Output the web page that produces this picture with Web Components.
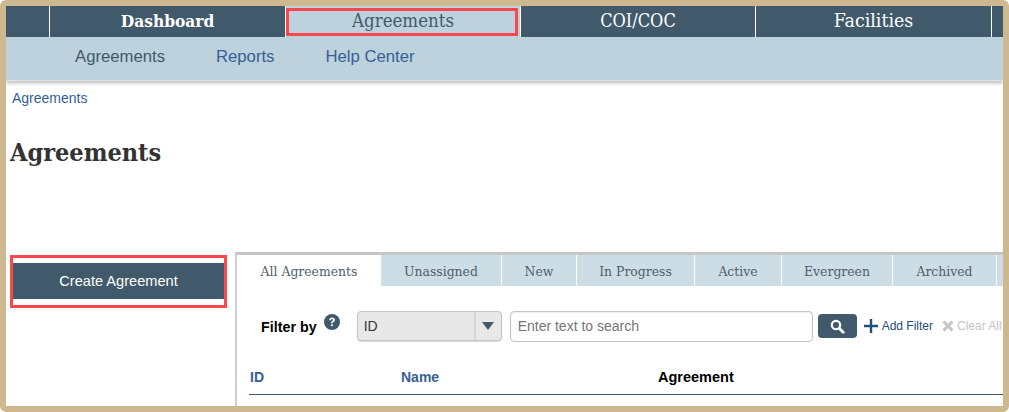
<!DOCTYPE html>
<html lang="en">
<head>
<meta charset="utf-8">
<title>Agreements</title>
<style>
  html, body { margin: 0; padding: 0; background: #fff; }
  body { font-family: "Liberation Sans", Arial, sans-serif; }
</style>
</head>
<body>
<app-frame>
  <top-nav>
    <nav-item style="width:236px" strong>Dashboard</nav-item>
    <nav-item style="width:235px" active>Agreements</nav-item>
    <nav-item style="width:235px;font-size:18px">COI/COC</nav-item>
    <nav-item style="width:236px;font-size:19.4px">Facilities</nav-item>
    <nav-item style="width:12px"></nav-item>
  </top-nav>
  <sub-nav>
    <a-link first>Agreements</a-link>
    <a-link>Reports</a-link>
    <a-link>Help Center</a-link>
  </sub-nav>
  <page-head title="Agreements" crumb="Agreements"></page-head>
  <work-area>
    <create-button slot="side">Create Agreement</create-button>
    <tab-bar slot="main">
      <tab-item style="width:144px" selected>All Agreements</tab-item>
      <tab-item style="width:121px">Unassigned</tab-item>
      <tab-item style="width:75px">New</tab-item>
      <tab-item style="width:118px">In Progress</tab-item>
      <tab-item style="width:87px">Active</tab-item>
      <tab-item style="width:111px">Evergreen</tab-item>
      <tab-item style="width:104px">Archived</tab-item>
      <tab-item style="width:12px"></tab-item>
    </tab-bar>
    <filter-bar slot="main"></filter-bar>
    <table-head slot="main"></table-head>
  </work-area>
</app-frame>

<script>
  class AppFrame extends HTMLElement {
    constructor() {
      super();
      this.attachShadow({ mode: 'open' });
      this.shadowRoot.innerHTML = `
        <style>
          :host {
            display: block;
            box-sizing: border-box;
            width: 1009px;
            height: 412px;
            border: 6px solid #cdb88f;
            border-radius: 6px;
            overflow: hidden;
            background: #fff;
          }
        </style>
        <slot></slot>
      `;
    }
  }

  class TopNav extends HTMLElement {
    constructor() {
      super();
      this.attachShadow({ mode: 'open' });
      this.shadowRoot.innerHTML = `
        <style>
          :host {
            display: flex;
            height: 31px;
            padding-left: 43px;
            background: #415a6b;
            overflow: hidden;
          }
        </style>
        <slot></slot>
      `;
    }
  }

  class NavItem extends HTMLElement {
    constructor() {
      super();
      this.attachShadow({ mode: 'open' });
      this.shadowRoot.innerHTML = `
        <style>
          :host {
            display: flex;
            flex: none;
            box-sizing: border-box;
            align-items: center;
            justify-content: center;
            padding-bottom: 2px;
            border-left: 1px solid #fff;
            color: #fff;
            font: 18.5px "DejaVu Serif Condensed", "DejaVu Serif", serif;
          }
          :host([strong]) { font-weight: 700; font-size: 17.2px; }
          :host([active]) {
            background: #bdd2dd;
            color: #415a6b;
            position: relative;
          }
          :host([active])::after {
            content: '';
            position: absolute;
            left: 0;
            top: 2px;
            box-sizing: border-box;
            width: 232px;
            height: 28px;
            border: 3px solid #f9474b;
          }
        </style>
        <slot></slot>
      `;
    }
  }

  class SubNav extends HTMLElement {
    constructor() {
      super();
      this.attachShadow({ mode: 'open' });
      this.shadowRoot.innerHTML = `
        <style>
          :host {
            display: flex;
            gap: 51px;
            align-items: center;
            height: 43px;
            padding: 0 0 3px 69px;
            box-sizing: border-box;
            background: #bdd2dd;
            box-shadow: 0 1px 0 #e4e4e4, 0 3px 4px rgba(0, 0, 0, .28);
            position: relative;
            font-size: 16.7px;
          }
        </style>
        <slot></slot>
      `;
    }
  }

  class ALink extends HTMLElement {
    constructor() {
      super();
      this.attachShadow({ mode: 'open' });
      this.shadowRoot.innerHTML = `
        <style>
          :host { display: block; color: #336195; }
          :host([first]) { color: #415a6b; }
        </style>
        <slot></slot>
      `;
    }
  }

  class PageHead extends HTMLElement {
    constructor() {
      super();
      this.attachShadow({ mode: 'open' });
      this.shadowRoot.innerHTML = `
        <style>
          :host {
            display: block;
            height: 172px;
            box-sizing: border-box;
            padding: 10px 0 0 4px;
          }
          .crumb {
            margin: 0 0 0 2px;
            color: #336195;
            font-size: 14px;
            line-height: 16px;
          }
          h1 {
            margin: 30px 0 0;
            color: #333;
            font: 700 25px/34px "DejaVu Serif Condensed", "DejaVu Serif", serif;
          }
        </style>
        <div class="crumb">${this.getAttribute('crumb')}</div>
        <h1>${this.getAttribute('title')}</h1>
      `;
    }
  }

  class WorkArea extends HTMLElement {
    constructor() {
      super();
      this.attachShadow({ mode: 'open' });
      this.shadowRoot.innerHTML = `
        <style>
          :host {
            display: flex;
            height: 154px;
            padding-left: 4px;
          }
          .side { width: 225px; flex: none; padding-top: 3px; }
          .main {
            flex: 1;
            min-width: 0;
            border-top: 3px solid #c6c6c6;
            border-left: 2px solid #cfcfcf;
            overflow: hidden;
          }
        </style>
        <div class="side"><slot name="side"></slot></div>
        <div class="main"><slot name="main"></slot></div>
      `;
    }
  }

  class CreateButton extends HTMLElement {
    constructor() {
      super();
      this.attachShadow({ mode: 'open' });
      this.shadowRoot.innerHTML = `
        <style>
          :host {
            display: block;
            box-sizing: border-box;
            width: 217px;
            height: 53px;
            padding: 5px 0 6px;
            border: 3px solid #f9474b;
            background: #fff;
          }
          div {
            height: 36px;
            background: #415a6b;
            color: #fff;
            font-size: 14.6px;
            line-height: 36px;
            text-align: center;
          }
        </style>
        <div><slot></slot></div>
      `;
    }
  }

  class TabBar extends HTMLElement {
    constructor() {
      super();
      this.attachShadow({ mode: 'open' });
      this.shadowRoot.innerHTML = `
        <style>
          :host { display: flex; height: 31px; }
        </style>
        <slot></slot>
      `;
    }
  }

  class TabItem extends HTMLElement {
    constructor() {
      super();
      this.attachShadow({ mode: 'open' });
      this.shadowRoot.innerHTML = `
        <style>
          :host {
            display: flex;
            flex: none;
            box-sizing: border-box;
            align-items: center;
            justify-content: center;
            background: #cddde6;
            border-right: 1px solid #fff;
            color: #4d5f6b;
            font: 13.8px "DejaVu Serif Condensed", "DejaVu Serif", serif;
          }
          :host([selected]) {
            background: #fff;
            border-right: 0;
          }
        </style>
        <slot></slot>
      `;
    }
  }

  class FilterBar extends HTMLElement {
    constructor() {
      super();
      this.attachShadow({ mode: 'open' });
      this.shadowRoot.innerHTML = `
        <style>
          :host {
            display: flex;
            align-items: center;
            height: 32px;
            margin-top: 24px;
            padding-left: 24px;
            font-size: 14px;
            white-space: nowrap;
          }
          .label { font-weight: 700; font-size: 14.3px; color: #000; margin-top: 2px; }
          .help { display: block; margin: -9px 0 0 7px; flex: none; }
          .select {
            display: flex;
            box-sizing: border-box;
            width: 145px;
            height: 30px;
            margin-left: 17px;
            background: #e8e8e8;
            border: 1px solid #c4c4c4;
            border-radius: 4px;
            box-shadow: 0 1px 1px rgba(0, 0, 0, .15);
            color: #333;
            line-height: 28px;
          }
          .select .value { flex: 1; padding-left: 6px; }
          .select .arrow {
            display: flex;
            width: 25px;
            align-items: center;
            justify-content: center;
            border-left: 2px solid #d6d6d6;
          }
          .input {
            box-sizing: border-box;
            width: 303px;
            height: 31px;
            margin-left: 8px;
            padding-left: 7px;
            border: 1px solid #c4c4c4;
            border-radius: 4px;
            box-shadow: inset 0 1px 2px rgba(0, 0, 0, .08);
            color: #757575;
            line-height: 29px;
          }
          .search {
            display: flex;
            width: 39px;
            height: 24px;
            margin-left: 5px;
            align-items: center;
            justify-content: center;
            border-radius: 4px;
            background: #415a6b;
          }
          .add {
            display: flex;
            align-items: center;
            gap: 4px;
            margin-left: 7px;
            color: #1f4e79;
            font-size: 12px;
          }
          .clear {
            display: flex;
            align-items: center;
            gap: 3px;
            margin-left: 9px;
            color: #c4c4c4;
            font-size: 12px;
          }
        </style>
        <span class="label">Filter by</span>
        <svg class="help" width="16" height="16" viewBox="0 0 16 16">
          <circle cx="8" cy="8" r="8" fill="#415a6b"/>
          <path d="M5.2 6.2C5.3 4.5 6.5 3.6 8.1 3.6c1.6 0 2.8.9 2.8 2.3 0 1.2-.8 1.7-1.5 2.2-.5.3-.8.6-.8 1.2H7c0-1.200.5-1.800 1.200-2.300.5-.4.9-.6.9-1.100 0-.5-.4-.8-1-.8-.7 0-1.100.4-1.200 1.100z" fill="#fff"/>
          <rect x="7" y="10.300" width="1.700" height="1.900" fill="#fff"/>
        </svg>
        <div class="select">
          <span class="value">ID</span>
          <span class="arrow">
            <svg width="12" height="8" viewBox="0 0 12 8"><path d="M0 0h12L6 8z" fill="#415a6b"/></svg>
          </span>
        </div>
        <div class="input">Enter text to search</div>
        <div class="search">
          <svg width="15" height="15" viewBox="0 0 15 15">
            <circle cx="6" cy="6" r="4.200" fill="none" stroke="#fff" stroke-width="2.200"/>
            <path d="M9.200 9.200L13.200 13.200" stroke="#fff" stroke-width="2.800" stroke-linecap="round"/>
          </svg>
        </div>
        <div class="add">
          <svg width="14" height="14" viewBox="0 0 14 14"><path d="M5.800 0h2.400v5.800H14v2.400H8.200V14H5.800V8.200H0V5.800h5.800z" fill="#1f4e79"/></svg>
          <span>Add Filter</span>
        </div>
        <div class="clear">
          <svg width="12" height="12" viewBox="0 0 12 12"><path d="M1.500 1.500L10.500 10.500M10.500 1.500L1.500 10.500" stroke="#c4c4c4" stroke-width="3"/></svg>
          <span>Clear All</span>
        </div>
      `;
    }
  }

  class TableHead extends HTMLElement {
    constructor() {
      super();
      this.attachShadow({ mode: 'open' });
      this.shadowRoot.innerHTML = `
        <style>
          :host {
            display: grid;
            grid-template-columns: 151px 257px 1fr;
            box-sizing: border-box;
            height: 41px;
            margin: 12px 0 0 12px;
            padding: 15px 0 0 1px;
            border-bottom: 1px solid #415a6b;
            font-size: 14px;
            font-weight: 700;
            line-height: 16px;
            color: #336195;
          }
          .plain { color: #000; font-size: 14.5px; }
        </style>
        <span>ID</span>
        <span>Name</span>
        <span class="plain">Agreement</span>
      `;
    }
  }

  customElements.define('app-frame', AppFrame);
  customElements.define('top-nav', TopNav);
  customElements.define('nav-item', NavItem);
  customElements.define('sub-nav', SubNav);
  customElements.define('a-link', ALink);
  customElements.define('page-head', PageHead);
  customElements.define('work-area', WorkArea);
  customElements.define('create-button', CreateButton);
  customElements.define('tab-bar', TabBar);
  customElements.define('tab-item', TabItem);
  customElements.define('filter-bar', FilterBar);
  customElements.define('table-head', TableHead);
</script>
</body>
</html>
